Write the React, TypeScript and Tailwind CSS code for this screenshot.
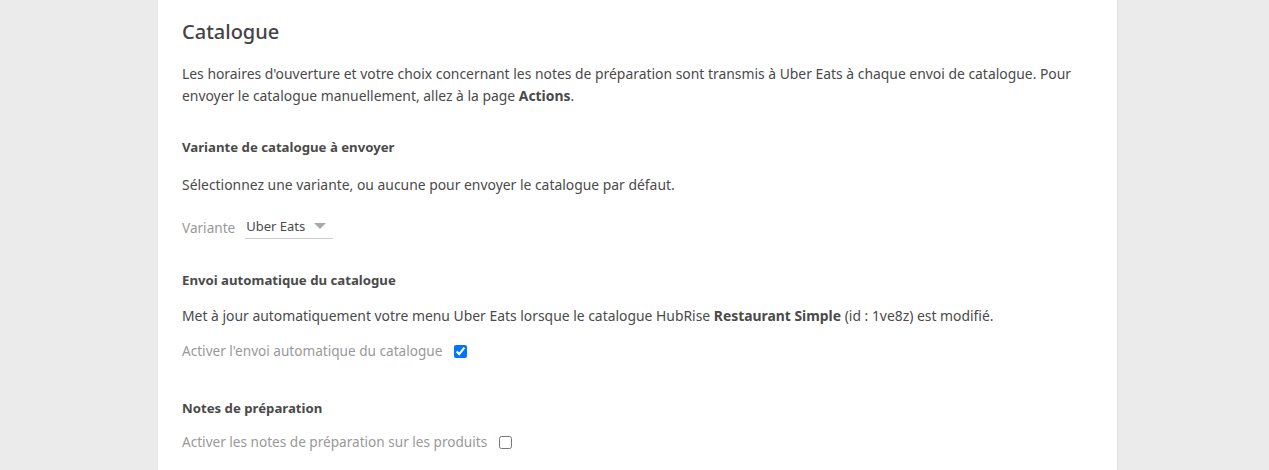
export default function App() {
  return (
    <div
      className="min-h-[470px] bg-[#ebebeb] text-[#4a4a4a] text-[14px] leading-[22px]"
      style={{ fontFamily: '"Noto Sans", "Open Sans", sans-serif' }}>
      <div className="ml-[158px] w-[960px] min-h-[470px] bg-white px-6 pt-[18px] border-r border-[#e0e0e0]">
        <h1 className="text-[20px] leading-[28px] font-medium text-[#444]">Catalogue</h1>

        <p className="mt-[17px] text-[13.9px]">
          Les horaires d'ouverture et votre choix concernant les notes de préparation sont transmis à
          Uber Eats à chaque envoi de catalogue. Pour envoyer le catalogue manuellement, allez à la
          page <strong className="font-bold">Actions</strong>.
        </p>

        <h2 className="mt-[29px] text-[13.2px] font-bold">Variante de catalogue à envoyer</h2>
        <p className="mt-[16px] text-[13.9px]">
          Sélectionnez une variante, ou aucune pour envoyer le catalogue par défaut.
        </p>

        <div className="mt-[20px] flex items-center">
          <span className="text-[13.6px] text-[#999]">Variante</span>
          <div className="ml-[10px] flex w-[88px] items-center border-b border-[#ccc] pb-[2px] text-[13px] leading-[20px]">
            <span className="ml-[1px]">Uber Eats</span>
            <span className="ml-auto mr-[7px] h-0 w-0 border-x-[6px] border-t-[6px] border-x-transparent border-t-[#aaa]" />
          </div>
        </div>

        <h2 className="mt-[30px] text-[13.2px] font-bold">Envoi automatique du catalogue</h2>
        <p className="mt-[14px] text-[13.9px]">
          Met à jour automatiquement votre menu Uber Eats lorsque le catalogue HubRise{" "}
          <strong className="font-bold">Restaurant Simple</strong> (id : 1ve8z) est modifié.
        </p>

        <label className="mt-[13px] flex items-center">
          <span className="text-[13.6px] text-[#999]">Activer l'envoi automatique du catalogue</span>
          <input type="checkbox" defaultChecked className="ml-[12px] h-[13px] w-[13px]" />
        </label>

        <h2 className="mt-[35px] text-[13.2px] font-bold">Notes de préparation</h2>
        <label className="mt-[12px] flex items-center">
          <span className="text-[13.6px] text-[#999]">Activer les notes de préparation sur les produits</span>
          <input type="checkbox" className="ml-[12px] h-[13px] w-[13px]" />
        </label>
      </div>
    </div>
  );
}
